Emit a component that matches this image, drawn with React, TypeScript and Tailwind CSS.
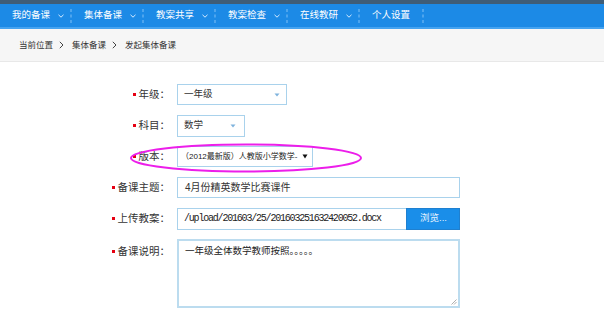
import React from "react";

const FONT = '"Liberation Sans", "Noto Sans CJK SC", sans-serif';

function Chevron() {
  return (
    <svg width="6" height="4" viewBox="0 0 6 4" className="shrink-0">
      <path d="M0.5 0.8 L3 3.2 L5.5 0.8" fill="none" stroke="#d6ebff" strokeWidth="1" />
    </svg>
  );
}

function Divider() {
  return (
    <svg width="2" height="14" viewBox="0 0 2 14" className="shrink-0">
      <rect x="0.5" y="0" width="1" height="3" fill="#7fc0f5" />
      <rect x="0.5" y="5.5" width="1" height="3" fill="#7fc0f5" />
      <rect x="0.5" y="11" width="1" height="3" fill="#7fc0f5" />
    </svg>
  );
}

function Crumb() {
  return (
    <svg width="5" height="8" viewBox="0 0 5 8" className="shrink-0">
      <path d="M0.8 0.8 L4 4 L0.8 7.2" fill="none" stroke="#444" strokeWidth="1" />
    </svg>
  );
}

function BlueArrow() {
  return (
    <svg width="6" height="4" viewBox="0 0 6 4" className="shrink-0">
      <path d="M0.5 0.5 L5.5 0.5 L3 3.5 Z" fill="#7fb3dd" />
    </svg>
  );
}

function Label({ text }: { text: string }) {
  return (
    <div className="w-[170px] shrink-0 flex justify-end items-center gap-[3px] text-[10.5px] text-[#333]">
      <span className="w-[3px] h-[3px] bg-[#e60012] inline-block" />
      <span>{text}</span>
    </div>
  );
}

export default function App() {
  const nav = ["我的备课", "集体备课", "教案共享", "教案检查", "在线教研"];
  return (
    <div className="w-[604px] h-[310px] bg-white relative overflow-hidden" style={{ fontFamily: FONT }}>
      <div className="h-[4px] bg-[#3f5d77]" />
      <div className="h-[23px] bg-[#1c8ae6] flex items-center pl-[12px] text-white text-[9.5px]">
        {nav.map((n) => (
          <div key={n} className="flex items-center">
            <span className="w-[40px] whitespace-nowrap">{n}</span>
            <span className="ml-[6px]"><Chevron /></span>
            <span className="ml-[6px]"><Divider /></span>
            <span className="w-[12px]" />
          </div>
        ))}
        <div className="flex items-center">
          <span className="w-[40px] whitespace-nowrap">个人设置</span>
          <span className="ml-[10px]"><Divider /></span>
        </div>
      </div>
      <div className="h-[2px] bg-[#45a3f0]" />
      <div className="h-[33px] bg-[#f6f6f6] border-b border-[#e8e8e8] flex items-center pl-[19px] text-[8.5px] text-[#333]">
        <span>当前位置</span>
        <span className="ml-[6px]"><Crumb /></span>
        <span className="ml-[8px]">集体备课</span>
        <span className="ml-[6px]"><Crumb /></span>
        <span className="ml-[8px]">发起集体备课</span>
      </div>

      <div className="pt-[22px] flex flex-col gap-[10px]">
        <div className="flex items-center h-[21px]">
          <Label text="年级：" />
          <div className="ml-[7px] w-[110px] h-[21px] border border-[#a9d2ec] flex items-center justify-between pl-[6px] pr-[6px] text-[9.5px] text-[#333]">
            <span>一年级</span>
            <BlueArrow />
          </div>
        </div>
        <div className="flex items-center h-[21px]">
          <Label text="科目：" />
          <div className="ml-[7px] w-[68px] h-[22px] border border-[#a9d2ec] flex items-center justify-between pl-[6px] pr-[8px] text-[9.5px] text-[#333]">
            <span>数学</span>
            <BlueArrow />
          </div>
        </div>
        <div className="flex items-center h-[21px]">
          <Label text="版本：" />
          <div className="ml-[7px] w-[136px] h-[21px] border border-[#a9d2ec] flex items-center justify-between pl-[3px] pr-[4px] text-[8px] text-[#222] whitespace-nowrap overflow-hidden">
            <span>（2012最新版）人教版小学数学-</span>
            <svg width="6" height="5" viewBox="0 0 6 5" className="shrink-0"><path d="M0.5 0.5 L5.5 0.5 L3 4.5 Z" fill="#111" /></svg>
          </div>
        </div>
        <div className="flex items-center h-[21px]">
          <Label text="备课主题：" />
          <div className="ml-[7px] w-[283px] h-[21px] border border-[#a9d2ec] flex items-center pl-[7px] text-[10px] text-[#333]">
            4月份精英数学比赛课件
          </div>
        </div>
        <div className="flex items-center h-[21px]">
          <Label text="上传教案：" />
          <div className="ml-[7px] w-[229px] h-[22px] border border-[#a9d2ec] border-r-0 flex items-center pl-[6px] text-[10px] text-[#222] whitespace-nowrap tracking-[-1.2px]" style={{ fontFamily: '"Liberation Mono", monospace' }}>
            /upload/201603/25/201603251632420052.docx
          </div>
          <div className="w-[54px] h-[22px] bg-[#1a8ee9] border border-[#1f80d0] flex items-center pl-[13px] text-[9.5px] text-[#e8f4ff]">
            浏览...
          </div>
        </div>
        <div className="flex items-start">
          <div className="pt-[5px] flex"><Label text="备课说明：" /></div>
          <div className="ml-[7px] w-[283px] h-[69px] border-2 border-[#bcdcef] relative pl-[6px] pt-[3px] text-[9.5px] text-[#222]">
            一年级全体数学教师按照。。。。。
            <svg width="6" height="6" viewBox="0 0 6 6" className="absolute right-[1px] bottom-[1px]">
              <path d="M5.5 0.5 L0.5 5.5 M5.5 3 L3 5.5" stroke="#999" strokeWidth="0.8" />
            </svg>
          </div>
        </div>
      </div>

      <svg className="absolute left-0 top-0 pointer-events-none" width="604" height="310">
        <ellipse cx="246" cy="158" rx="115" ry="13.5" fill="none" stroke="#ec1eea" strokeWidth="2" />
      </svg>
    </div>
  );
}
